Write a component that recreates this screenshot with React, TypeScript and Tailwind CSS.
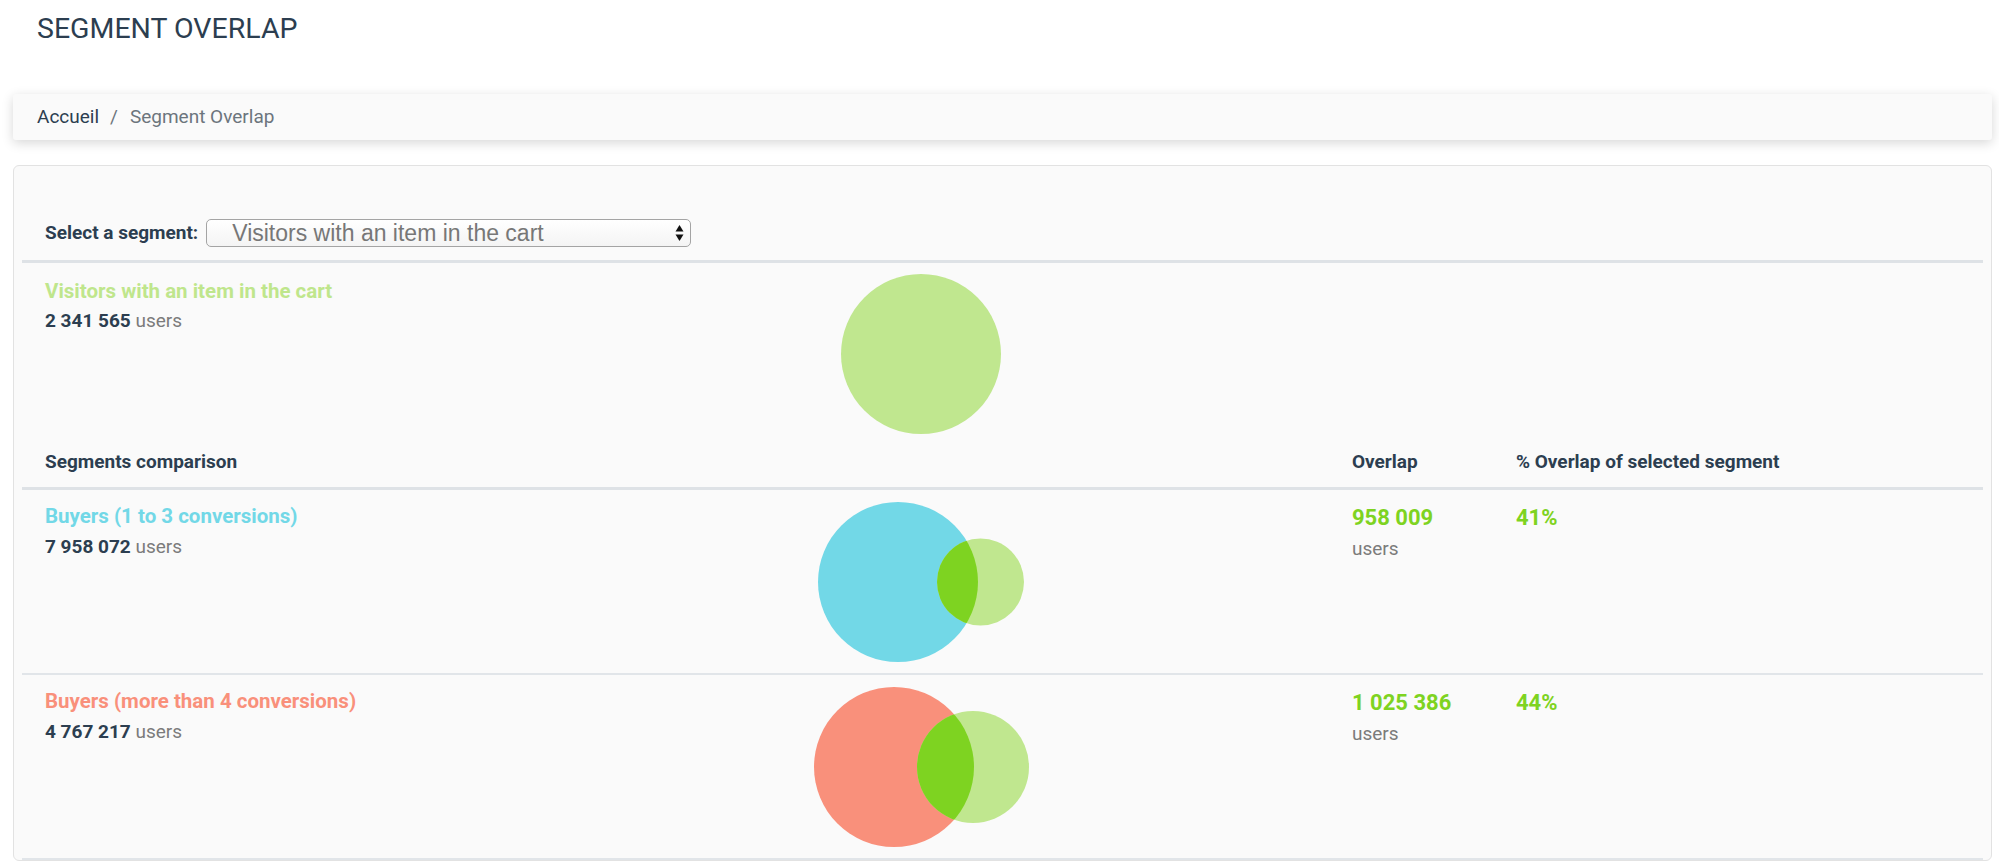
import React from "react";

type Seg = {
  name: string;
  labelClass: string;
  fill: string;
  count: string;
  overlap: string;
  pct: string;
  bigCx: number;
  bigR: number;
  smallCx: number;
  smallR: number;
};

const selected = {
  name: "Visitors with an item in the cart",
  count: "2 341 565",
};

const segments: Seg[] = [
  {
    name: "Buyers (1 to 3 conversions)",
    labelClass: "text-[#72d8e7]",
    fill: "#72d8e7",
    count: "7 958 072",
    overlap: "958 009",
    pct: "41%",
    bigCx: 118,
    bigR: 80,
    smallCx: 200.5,
    smallR: 43.5,
  },
  {
    name: "Buyers (more than 4 conversions)",
    labelClass: "text-[#f9907b]",
    fill: "#f9907b",
    count: "4 767 217",
    overlap: "1 025 386",
    pct: "44%",
    bigCx: 114,
    bigR: 80,
    smallCx: 193,
    smallR: 56,
  },
];

const LIGHT_GREEN = "#c0e78f";
const OVERLAP_GREEN = "#7ed321";

// two circles, the shared part painted in the stronger green
const Venn = ({ seg, id }: { seg: Seg; id: string }) => {
  const cy = 92;
  return (
    <svg width="549" height="183" className="block">
      <defs>
        <clipPath id={id}>
          <circle cx={seg.bigCx} cy={cy} r={seg.bigR} />
        </clipPath>
      </defs>
      <circle cx={seg.bigCx} cy={cy} r={seg.bigR} fill={seg.fill} />
      <circle cx={seg.smallCx} cy={cy} r={seg.smallR} fill={LIGHT_GREEN} />
      <circle
        cx={seg.smallCx}
        cy={cy}
        r={seg.smallR}
        fill={OVERLAP_GREEN}
        clipPath={`url(#${id})`}
      />
    </svg>
  );
};

const SelectBox = () => (
  <div className="flex h-[28px] w-[485px] items-center justify-between rounded-[5px] border border-[#a4a4a4] bg-gradient-to-b from-[#ffffff] to-[#f4f4f4] pl-[25px] pr-[6px]">
    <span className="font-['Liberation_Sans',Arial,sans-serif] text-[23px] leading-[26px] text-[#777777]">
      Visitors with an item in the cart
    </span>
    <svg width="9" height="18" viewBox="0 0 9 18">
      <path d="M4.5 1 L8.5 7.5 L0.5 7.5 Z" fill="#111" />
      <path d="M4.5 17 L8.5 10.5 L0.5 10.5 Z" fill="#111" />
    </svg>
  </div>
);

export default function App() {
  return (
    <div className="min-h-screen bg-white pl-[13px] pr-[7px] font-['Roboto',sans-serif] text-[#2c3e50]">
      <h1 className="pl-[24px] pt-[12px] text-[28.5px] font-normal leading-[34px] text-[#2c3e50]">
        SEGMENT OVERLAP
      </h1>

      <nav className="mt-[48px] flex h-[46px] items-center rounded-[3px] bg-[#fafafa] pl-[24px] text-[19px] shadow-[0_3px_12px_rgba(0,0,0,0.16)]">
        <span className="text-[#2c3e50]">Accueil</span>
        <span className="pl-[11px] pr-[12px] text-[#6c757d]">/</span>
        <span className="text-[#6c757d]">Segment Overlap</span>
      </nav>

      <div className="mt-[25px] rounded-[6px] border border-[#e2e2e2] bg-[#fafafa] px-[8px]">
        <div className="flex items-center border-b-[3px] border-[#dee2e6] pb-[12px] pl-[23px] pt-[53px]">
          <span className="mr-[8px] text-[19px] font-bold">Select a segment:</span>
          <SelectBox />
        </div>

        <div className="grid h-[178px] grid-cols-[758px_549px_1fr]">
          <div className="pl-[23px] pt-[16px]">
            <div className="text-[20.5px] font-bold leading-[24px] text-[#bfe68c]">
              {selected.name}
            </div>
            <div className="mt-[6px] text-[19px] leading-[24px]">
              <span className="font-bold">{selected.count}</span>{" "}
              <span className="text-[#7b7b7b]">users</span>
            </div>
          </div>
          <svg width="549" height="178" className="block">
            <circle cx="141" cy="91" r="80" fill={LIGHT_GREEN} />
          </svg>
          <div />
        </div>

        <div className="grid h-[49px] grid-cols-[758px_549px_164px_1fr] border-b-[3px] border-[#dee2e6] pt-[11px] text-[19px] font-bold leading-[20px]">
          <div className="pl-[23px]">Segments comparison</div>
          <div />
          <div className="pl-[23px]">Overlap</div>
          <div className="pl-[23px]">% Overlap of selected segment</div>
        </div>

        {segments.map((seg, i) => (
          <div
            key={seg.name}
            className="grid h-[185px] grid-cols-[758px_549px_164px_1fr] border-b-2 border-[#e1e5e9]">
            <div className="pl-[23px] pt-[14px]">
              <div className={`text-[20.5px] font-bold leading-[24px] ${seg.labelClass}`}>
                {seg.name}
              </div>
              <div className="mt-[7px] text-[19px] leading-[24px]">
                <span className="font-bold">{seg.count}</span>{" "}
                <span className="text-[#7b7b7b]">users</span>
              </div>
            </div>
            <Venn seg={seg} id={`venn-${i}`} />
            <div className="pl-[23px] pt-[14px]">
              <div className="text-[22px] font-bold leading-[28px] text-[#7ed321]">
                {seg.overlap}
              </div>
              <div className="mt-[5px] text-[19px] leading-[24px] text-[#7b7b7b]">users</div>
            </div>
            <div className="pl-[23px] pt-[14px]">
              <div className="text-[22px] font-bold leading-[28px] text-[#7ed321]">
                {seg.pct}
              </div>
            </div>
          </div>
        ))}
      </div>
    </div>
  );
}
